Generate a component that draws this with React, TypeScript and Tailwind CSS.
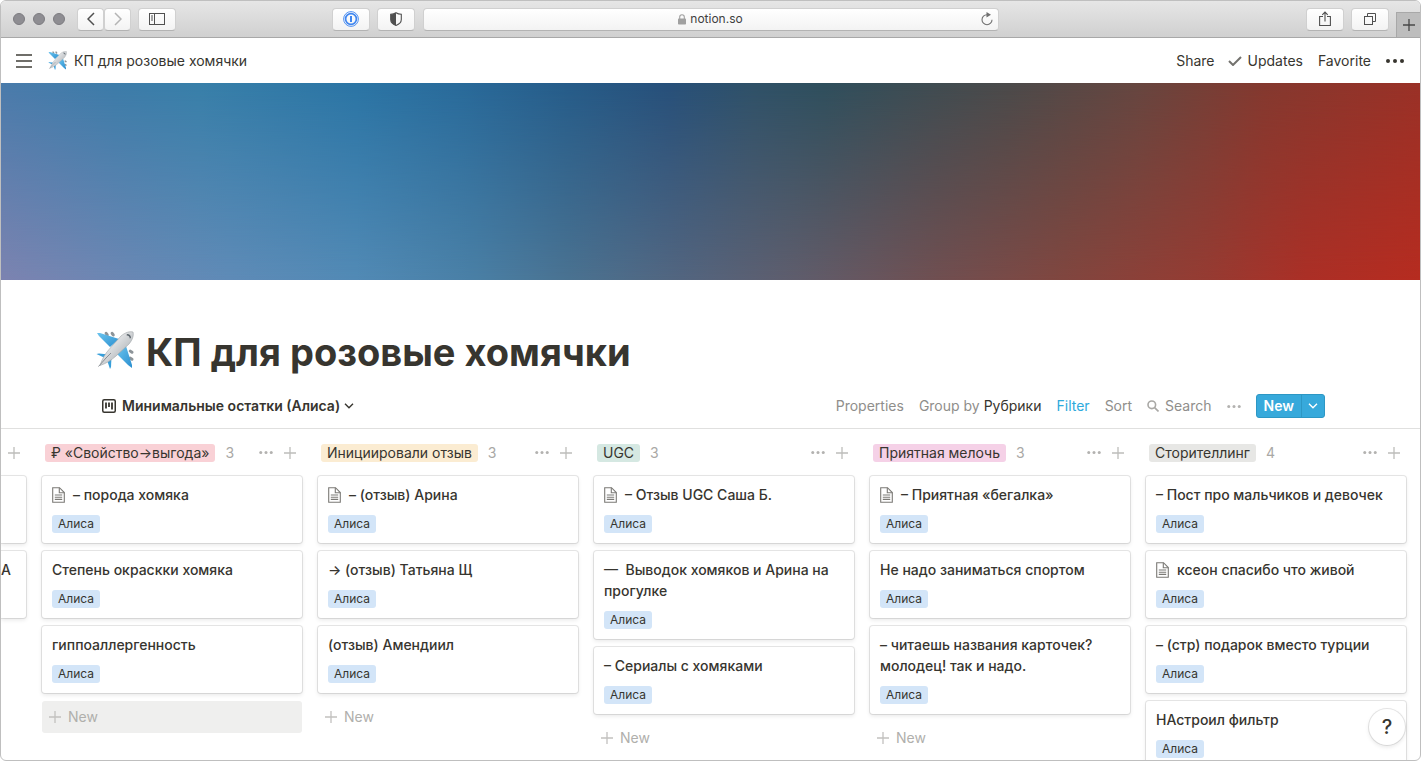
import type { ReactNode } from 'react';

interface Card {
  title: string;
  tag: string;
  hasPage?: boolean;
}

interface Column {
  name: string;
  color: string;
  cards: Card[];
  hovered?: boolean;
}

const columns: Column[] = [
  {
    name: '₽ «Свойство→выгода»',
    color: 'bg-[#f9d1d6]',
    hovered: true,
    cards: [
      { title: '– порода хомяка', tag: 'Алиса', hasPage: true },
      { title: 'Степень окраскки хомяка', tag: 'Алиса' },
      { title: 'гиппоаллергенность', tag: 'Алиса' },
    ],
  },
  {
    name: 'Инициировали отзыв',
    color: 'bg-[#fbecd2]',
    cards: [
      { title: '– (отзыв) Арина', tag: 'Алиса', hasPage: true },
      { title: '→ (отзыв) Татьяна Щ', tag: 'Алиса' },
      { title: '(отзыв) Амендиил', tag: 'Алиса' },
    ],
  },
  {
    name: 'UGC',
    color: 'bg-[#d5e8e2]',
    cards: [
      { title: '– Отзыв UGC Саша Б.', tag: 'Алиса', hasPage: true },
      { title: '—  Выводок хомяков и Арина на прогулке', tag: 'Алиса' },
      { title: '– Сериалы с хомяками', tag: 'Алиса' },
    ],
  },
  {
    name: 'Приятная мелочь',
    color: 'bg-[#f5d1e7]',
    cards: [
      { title: '– Приятная «бегалка»', tag: 'Алиса', hasPage: true },
      { title: 'Не надо заниматься спортом', tag: 'Алиса' },
      { title: '– читаешь названия карточек? молодец! так и надо.', tag: 'Алиса' },
    ],
  },
  {
    name: 'Сторителлинг',
    color: 'bg-[#e7e7e5]',
    cards: [
      { title: '– Пост про мальчиков и девочек', tag: 'Алиса' },
      { title: 'ксеон спасибо что живой', tag: 'Алиса', hasPage: true },
      { title: '– (стр) подарок вместо турции', tag: 'Алиса' },
      { title: 'НАстроил фильтр', tag: 'Алиса' },
    ],
  },
];

function Plane({ className }: { className: string }) {
  return (
    <svg viewBox="0 0 38 38" className={className} aria-hidden="true">
      <defs>
        <linearGradient id="wing" x1="0" y1="0" x2="1" y2="1">
          <stop offset="0" stopColor="#6cc4ee" />
          <stop offset="1" stopColor="#2a8fd0" />
        </linearGradient>
        <linearGradient id="body" x1="0" y1="0" x2="1" y2="1">
          <stop offset="0.2" stopColor="#f4f5f6" />
          <stop offset="0.75" stopColor="#b4b8bc" />
        </linearGradient>
      </defs>
      <g fill="#8d9499">
        <rect x="9" y="1" width="3" height="5" rx="1.5" transform="rotate(-35 10 3)" />
        <rect x="15" y="1" width="3" height="5" rx="1.5" transform="rotate(-35 16 3)" />
        <rect x="33" y="19" width="5" height="3" rx="1.5" transform="rotate(35 35 20)" />
        <rect x="33" y="26" width="5" height="3" rx="1.5" transform="rotate(35 35 27)" />
      </g>
      <path d="M1 2 L4 2 L23 8 L14 16 L3 5 Z" fill="url(#wing)" />
      <path d="M30 15 L36 34 L36 37 L32 34 L21 23 Z" fill="url(#wing)" />
      <path d="M0.5 23 L3 22.5 L13 23.5 L9 27 Z" fill="#379fda" />
      <path d="M15.5 25.5 L15 36 L14 38 L11 29 Z" fill="#379fda" />
      <path
        d="M37 1 C38 4 36.5 9 33 13 L20 25 C15 29.5 10 32.5 4 34.5 C6 28 9 23 13 18.5 L25 5 C29 1.5 34 0 37 1 Z"
        fill="url(#body)"
        stroke="#9da2a6"
        strokeWidth="0.6"
      />
      <path d="M31 3 C33.5 3 35 4.5 35 7 L33.8 7.5 C33.5 5.5 32.8 4.7 30.5 4.3 Z" fill="#5d666d" />
      <path d="M15 22 L10 27 L2.5 35.5" stroke="#8b9095" strokeWidth="1" fill="none" />
    </svg>
  );
}

function Plus({ className = 'text-[#bdbdbb]' }: { className?: string }) {
  return (
    <svg viewBox="0 0 12 12" className={`size-3 shrink-0 ${className}`} fill="none" stroke="currentColor" aria-hidden="true">
      <path d="M6 0v12M0 6h12" strokeWidth="1.3" />
    </svg>
  );
}

function Dots({ className }: { className: string }) {
  return (
    <svg viewBox="0 0 18 4" className={className} fill="currentColor" aria-hidden="true">
      <circle cx="2" cy="2" r="2" />
      <circle cx="9" cy="2" r="2" />
      <circle cx="16" cy="2" r="2" />
    </svg>
  );
}

function Chevron({ className }: { className: string }) {
  return (
    <svg viewBox="0 0 10 6" className={className} fill="none" stroke="currentColor" strokeWidth="1.4" aria-hidden="true">
      <path d="M1 0.8 L5 4.8 L9 0.8" />
    </svg>
  );
}

function PageIcon() {
  return (
    <svg
      viewBox="0 0 13 16"
      className="mr-2 inline-block h-4 w-[13px] align-[-3px] text-[#7b7a76]"
      fill="none"
      stroke="currentColor"
      strokeWidth="1.1"
      aria-hidden="true"
    >
      <path d="M0.7 0.7 H7.5 L12.3 5.5 V15.3 H0.7 Z" />
      <path d="M7.3 0.7 V5.7 H12.3" />
      <path d="M2.8 8 H10.2 M2.8 10.2 H10.2 M2.8 12.4 H10.2" />
    </svg>
  );
}

function ToolbarButton({ label, className = 'w-[38px]', children }: { label: string; className?: string; children: ReactNode }) {
  return (
    <button
      type="button"
      aria-label={label}
      className={`flex h-[23px] shrink-0 items-center justify-center rounded border border-[#d0d0d0] border-b-[#b3b3b3] bg-linear-to-b from-white to-[#f3f3f3] text-[#505050] ${className}`}
    >
      {children}
    </button>
  );
}

function BrowserBar() {
  return (
    <div className="flex h-[37px] shrink-0 items-center border-b border-[#a8a8a8] bg-linear-to-b from-[#e6e6e6] to-[#d0d0d0]">
      <div className="flex flex-1 items-center pr-2 pl-3">
        <div className="flex gap-2">
          <span className="size-3 rounded-full border border-[#7c7b80] bg-[#8e8d92]" />
          <span className="size-3 rounded-full border border-[#7c7b80] bg-[#8e8d92]" />
          <span className="size-3 rounded-full border border-[#7c7b80] bg-[#8e8d92]" />
        </div>
        <div className="ml-3 flex">
          <ToolbarButton label="Back" className="w-[27px]">
            <svg viewBox="0 0 8 14" className="h-3.5 w-2" fill="none" stroke="currentColor" strokeWidth="1.5">
              <path d="M7 1 L1 7 L7 13" />
            </svg>
          </ToolbarButton>
          <ToolbarButton label="Forward" className="w-[27px]">
            <svg viewBox="0 0 8 14" className="h-3.5 w-2 text-[#b4b4b4]" fill="none" stroke="currentColor" strokeWidth="1.5">
              <path d="M1 1 L7 7 L1 13" />
            </svg>
          </ToolbarButton>
        </div>
        <div className="ml-[7px]">
          <ToolbarButton label="Sidebar">
            <svg viewBox="0 0 16 12" className="h-3 w-4" fill="none" stroke="currentColor">
              <rect x="0.5" y="0.5" width="15" height="11" />
              <path d="M5.5 0.5V11.5M2 3H4M2 5H4M2 7H4" />
            </svg>
          </ToolbarButton>
        </div>
        <div className="ml-auto flex gap-[7px]">
          <ToolbarButton label="Passwords">
            <svg viewBox="0 0 16 16" className="size-4" fill="none" stroke="#3f86f0">
              <circle cx="8" cy="8" r="7.4" strokeWidth="0.9" />
              <circle cx="8" cy="8" r="5.4" strokeWidth="1.7" />
              <path d="M8 5V11" strokeWidth="2" />
            </svg>
          </ToolbarButton>
          <ToolbarButton label="Privacy report">
            <svg viewBox="0 0 12 14" className="h-3.5 w-3" fill="none" stroke="currentColor" strokeWidth="1.1">
              <path d="M6 0.7 C7.5 1.7 9.3 2.2 11.3 2.3 V7.5 C11.3 10.3 9 12.3 6 13.4 C3 12.3 0.7 10.3 0.7 7.5 V2.3 C2.7 2.2 4.5 1.7 6 0.7 Z" />
              <path
                d="M6 0.7 V13.4 C3 12.3 0.7 10.3 0.7 7.5 V2.3 C2.7 2.2 4.5 1.7 6 0.7 Z"
                fill="currentColor"
                stroke="none"
              />
            </svg>
          </ToolbarButton>
        </div>
      </div>
      <div className="flex h-[23px] w-[576px] items-center rounded border border-[#d0d0d0] border-b-[#b3b3b3] bg-linear-to-b from-white to-[#f3f3f3] px-[5px]">
        <label className="flex flex-1 items-center justify-center gap-1 pl-3">
          <svg viewBox="0 0 8 11" className="h-[11px] w-2" aria-hidden="true">
            <rect x="0" y="4.5" width="8" height="6" rx="0.8" fill="#a0a0a0" />
            <path d="M1.7 5V3A2.3 2.3 0 0 1 6.3 3V5" fill="none" stroke="#a0a0a0" strokeWidth="1.1" />
          </svg>
          <input
            type="text"
            aria-label="Address"
            defaultValue="notion.so"
            className="field-sizing-content bg-transparent text-xs text-[#404040] outline-none"
          />
        </label>
        <button type="button" aria-label="Reload" className="text-[#707070]">
          <svg viewBox="0 0 12 14" className="h-3.5 w-3" fill="none" stroke="currentColor">
            <path d="M7 2.7 H6 A5 5 0 1 0 11 7.7" strokeWidth="1.1" />
            <path d="M5.5 0 L10 2.7 L5.5 5.4 Z" fill="currentColor" stroke="none" />
          </svg>
        </button>
      </div>
      <div className="flex flex-1 items-center justify-end gap-[7px] self-stretch pl-5">
        <ToolbarButton label="Share page">
          <svg viewBox="0 0 12 16" className="h-4 w-3" fill="none" stroke="currentColor" strokeWidth="1.1">
            <path d="M4 5.5H0.6V14.5H11.4V5.5H8" />
            <path d="M6 10.5V1.2M3.3 3.8L6 1L8.7 3.8" />
          </svg>
        </ToolbarButton>
        <ToolbarButton label="Show tabs">
          <svg viewBox="0 0 12 12" className="size-3" fill="none" stroke="currentColor">
            <rect x="0.5" y="3.5" width="8" height="8" />
            <path d="M3.5 3.5V0.5H11.5V8.5H8.5" />
          </svg>
        </ToolbarButton>
        <button
          type="button"
          aria-label="New tab"
          className="flex h-[25px] w-6 shrink-0 items-center justify-center self-end border-t border-l border-[#a8a8a8] bg-[#bdbdbd]"
        >
          <Plus className="text-[#484848]" />
        </button>
      </div>
    </div>
  );
}

function PageHeader() {
  return (
    <header className="flex h-[45px] shrink-0 items-center justify-between pr-4 pl-[15px] text-sm">
      <div className="flex items-center">
        <button type="button" aria-label="Menu">
          <svg viewBox="0 0 16 14" className="h-3.5 w-4" stroke="#6f6e69" strokeWidth="1.8">
            <path d="M0 1H16M0 7H16M0 13H16" />
          </svg>
        </button>
        <a href="#" className="ml-4 flex items-center gap-[7px]">
          <Plane className="size-[19px]" />
          КП для розовые хомячки
        </a>
      </div>
      <nav className="flex items-center gap-[15px]">
        <button type="button">Share</button>
        <button type="button" className="-ml-0.5 flex items-center gap-1.5">
          <svg viewBox="0 0 14 10" className="h-2.5 w-3.5" fill="none" stroke="#73726e" strokeWidth="2">
            <path d="M1 5 L5 9 L13 1" />
          </svg>
          Updates
        </button>
        <button type="button">Favorite</button>
        <button type="button" aria-label="More">
          <Dots className="h-1 w-[18px]" />
        </button>
      </nav>
    </header>
  );
}

function Cover() {
  return (
    <div className="h-[197px] shrink-0 bg-[linear-gradient(90deg,#4a7bab_0%,#3d7ca9_8%,#387fa9_14%,#2b75a5_25%,#296b9b_32%,#265c89_40%,#27507a_47%,#2f5168_53%,#2f4f5d_58%,#3a4d55_63%,#4b4a4a_71%,#664640_80%,#84392f_89%,#9a3127_100%)]">
      <div className="h-full bg-[linear-gradient(90deg,#7c83b0_0%,#6a88b4_9%,#5f8bb7_16%,#528ab5_25%,#4a80a6_33%,#4a7291_40%,#53657f_48%,#5f5d6c_56%,#704f51_66%,#81463f_75%,#963b32_85%,#ab2f26_92%,#b62c20_100%)] [mask-image:linear-gradient(180deg,transparent,black)]" />
    </div>
  );
}

function ViewBar() {
  return (
    <div className="flex h-[45px] shrink-0 items-center justify-between border-b border-[#e0e0df] pr-[95px] pl-[101px] text-sm text-[#8f8e8b]">
      <button type="button" className="flex items-center font-semibold text-[#37352f]">
        <svg viewBox="0 0 14 14" className="mr-1.5 size-3.5" fill="none" stroke="currentColor" aria-hidden="true">
          <rect x="0.75" y="0.75" width="12.5" height="12.5" rx="1.5" strokeWidth="1.5" />
          <path d="M4 3.5V9.5M7 3.5V8M10 3.5V10.5" strokeWidth="1.8" />
        </svg>
        Минимальные остатки (Алиса)
        <Chevron className="ml-1 h-1.5 w-2.5" />
      </button>
      <div className="flex items-center gap-[15px]">
        <button type="button">Properties</button>
        <button type="button">
          Group by <span className="text-[#37352f]">Рубрики</span>
        </button>
        <button type="button" className="text-[#2eaadc]">
          Filter
        </button>
        <button type="button">Sort</button>
        <button type="button" className="flex items-center gap-1.5">
          <svg viewBox="0 0 12 12" className="size-3" fill="none" stroke="#a9a8a5" strokeWidth="1.6" aria-hidden="true">
            <circle cx="4.8" cy="4.8" r="3.8" />
            <path d="M7.6 7.6L11.5 11.5" />
          </svg>
          Search
        </button>
        <button type="button" aria-label="More options" className="text-[#b3b2b0]">
          <Dots className="h-[3px] w-[14px]" />
        </button>
        <div className="flex h-6 overflow-hidden rounded-[3px] border border-[#2d97c4] bg-[#37a9db] text-white">
          <button type="button" className="px-[7px] font-semibold">
            New
          </button>
          <button type="button" aria-label="New from template" className="flex w-[23px] items-center justify-center border-l border-[#2d97c4]">
            <Chevron className="h-1.5 w-2.5" />
          </button>
        </div>
      </div>
    </div>
  );
}

const cardStyle = 'bg-white shadow-[0_0_0_1px_rgba(15,15,15,0.1),0_2px_4px_rgba(15,15,15,0.1)]';

function BoardCard({ card }: { card: Card }) {
  return (
    <article className={`rounded-[3px] px-2.5 pt-2 pb-2.5 ${cardStyle}`}>
      <h3 className="text-sm leading-[21px] font-medium whitespace-pre-wrap">
        {card.hasPage && <PageIcon />}
        {card.title}
      </h3>
      <span className="mt-2.5 flex h-[18px] w-fit items-center rounded-[3px] bg-[#d3e5f8] px-1.5 text-xs">{card.tag}</span>
    </article>
  );
}

function BoardColumn({ column }: { column: Column }) {
  return (
    <section className="w-[260px] shrink-0">
      <div className="flex h-[47px] items-center pr-1.5 pl-[3px] text-sm">
        <h2 className={`flex h-[18px] items-center rounded-[3px] px-1.5 ${column.color}`}>{column.name}</h2>
        <span className="ml-2.5 text-[#a9a8a5]">{column.cards.length}</span>
        <button type="button" aria-label={`${column.name} options`} className="ml-auto text-[#b3b2b0]">
          <Dots className="h-[3px] w-[14px]" />
        </button>
        <button type="button" aria-label={`Add to ${column.name}`} className="ml-[11px]">
          <Plus />
        </button>
      </div>
      <div className="flex flex-col gap-2">
        {column.cards.map((card) => (
          <BoardCard key={card.title} card={card} />
        ))}
        <button
          type="button"
          className={`flex h-8 items-center gap-[7px] rounded-[3px] px-[7px] text-sm text-[#b0afac] ${column.hovered ? 'bg-[#efefee]' : ''}`}
        >
          <Plus className="text-[#c2c1bf]" />
          New
        </button>
      </div>
    </section>
  );
}

export default function App() {
  return (
    <div className="relative flex h-screen flex-col overflow-hidden rounded-md border border-[#bfbfbf] bg-white font-['Inter','Liberation_Sans',sans-serif] text-[#37352f]">
      <BrowserBar />
      <PageHeader />
      <Cover />
      <h1 className="mt-12 mb-2 flex shrink-0 items-center gap-3 px-[95px] text-[38px] leading-[48px] font-bold">
        <Plane className="mb-1 size-[38px]" />
        КП для розовые хомячки
      </h1>
      <ViewBar />
      <main className="flex min-h-0 flex-1 gap-4 overflow-hidden">
        {/* Tail of the column scrolled off to the left */}
        <section className="w-[25px] shrink-0">
          <div className="flex h-[47px] items-center justify-end pr-1.5">
            <button type="button" aria-label="Add card">
              <Plus />
            </button>
          </div>
          <div className="flex flex-col gap-2">
            <div className={`h-[67px] rounded-r-[3px] ${cardStyle}`} />
            <div className={`h-[67px] rounded-r-[3px] pt-2 text-sm leading-[21px] font-medium ${cardStyle}`}>А</div>
          </div>
        </section>
        {columns.map((column) => (
          <BoardColumn key={column.name} column={column} />
        ))}
      </main>
      <button
        type="button"
        aria-label="Help"
        className="absolute right-[15px] bottom-[15px] size-9 rounded-full bg-white text-xl font-medium shadow-[0_0_0_1px_rgba(15,15,15,0.1),0_2px_4px_rgba(15,15,15,0.1)]"
      >
        ?
      </button>
    </div>
  );
}
